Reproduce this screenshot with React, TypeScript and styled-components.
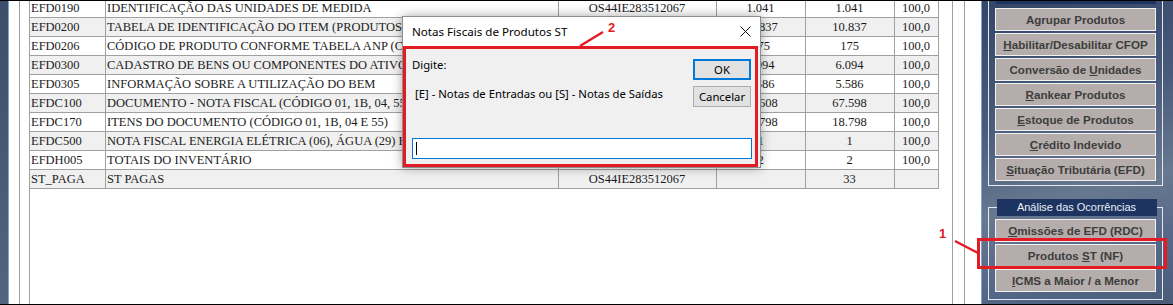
import React from "react";
import styled, { createGlobalStyle } from "styled-components";

const GlobalStyle = createGlobalStyle`
  html, body {
    margin: 0;
    padding: 0;
    background: #fff;
  }
  body {
    width: 1173px;
    height: 305px;
    overflow: hidden;
  }
`;

const Screen = styled.div`
  position: relative;
  display: flex;
  width: 1173px;
  height: 305px;
  box-sizing: border-box;
  border-top: 1px solid #000;
  border-bottom: 1px solid #000;
  overflow: hidden;
`;

const DesktopEdge = styled.div`
  flex: none;
  width: 8px;
  background: linear-gradient(180deg, #3c4d6a 0%, #52647e 100%);
`;

const Workspace = styled.div`
  flex: none;
  display: flex;
  width: 974px;
  box-sizing: border-box;
  padding: 0 16px 0 10px;
  background: #fff;
  border-left: 1px solid #7ea4d4;
  border-right: 1px solid #7ea4d4;
`;

const Frame = styled.div<{ $padLeft: number; $padRight: number }>`
  flex: 1;
  display: flex;
  min-width: 0;
  padding: 0 ${(p) => p.$padRight}px 0 ${(p) => p.$padLeft}px;
  border-left: 1px solid #a0a0a0;
  border-right: 1px solid #a0a0a0;
`;

const Grid = styled.div`
  flex: 1;
  min-width: 0;
  margin-top: -2px;
  font-family: "Liberation Serif", "Times New Roman", serif;
  font-size: 12.5px;
  color: #1c1c1c;
`;

const Row = styled.div<{ $alt: boolean }>`
  display: grid;
  grid-template-columns: 76px 453px 158px 89px 89px 44px;
  width: 909px;
  height: 19px;
  box-sizing: border-box;
  border-bottom: 1px solid #a0a0a0;
  background: ${(p) => (p.$alt ? "#f0f0f0" : "#fff")};
`;

const Cell = styled.div<{ $center?: boolean }>`
  box-sizing: border-box;
  border-right: 1px solid #a0a0a0;
  padding: 0 2px 0 1px;
  line-height: 18px;
  white-space: nowrap;
  overflow: hidden;
  text-align: ${(p) => (p.$center ? "center" : "left")};
`;

const Panel = styled.div`
  flex: none;
  display: flex;
  flex-direction: column;
  width: 191px;
  box-sizing: border-box;
  padding: 0 10px 0 6px;
  background: linear-gradient(165deg, #33466a 0%, #485b7b 35%, #67788f 62%, #57698a 80%, #4a5c7a 100%);
`;

const GroupBox = styled.div`
  display: flex;
  flex-direction: column;
  gap: 2px;
  padding: 0 6px 4px;
  border: 1px solid #e4e9ef;
  border-top: none;
`;

const CutTitle = styled.div`
  height: 3px;
  margin: 0 0 2px 1px;
  width: 160px;
  background: #1d3461;
`;

const FieldGroup = styled.fieldset`
  display: flex;
  flex-direction: column;
  gap: 2px;
  margin: 13px 0 0;
  padding: 3px 6px 7px;
  min-inline-size: 0;
  border: 1px solid #e4e9ef;
`;

const Legend = styled.legend`
  box-sizing: border-box;
  width: 160px;
  height: 17px;
  margin-left: 1px;
  padding: 0;
  background: #1d3461;
  color: #e9eef5;
  font-family: "Liberation Sans", Arial, sans-serif;
  font-size: 11px;
  line-height: 17px;
  text-align: center;
`;

const ActionButton = styled.button`
  display: block;
  width: 161px;
  height: 23px;
  box-sizing: border-box;
  margin: 0;
  padding: 0;
  border: 1px solid #f2f2f2;
  background: #b4adab;
  color: #3d3d3d;
  font-family: "Liberation Sans", Arial, sans-serif;
  font-weight: bold;
  font-size: 11.6px;
  line-height: 21px;
  text-align: center;
  white-space: nowrap;

  u {
    text-decoration-thickness: 1px;
    text-underline-offset: 1px;
  }
`;

const Dialog = styled.div`
  position: absolute;
  left: 402px;
  top: 15px;
  width: 359px;
  height: 152px;
  box-sizing: border-box;
  display: flex;
  flex-direction: column;
  border: 1px solid #8e8e8e;
  background: #f0f0f0;
  box-shadow: 0 0 10px rgba(0, 0, 0, 0.35);
  font-family: "Noto Sans", "Open Sans", sans-serif;
  font-size: 11.3px;
  color: #000;
`;

const TitleBar = styled.div`
  display: flex;
  align-items: center;
  justify-content: space-between;
  height: 29px;
  padding: 0 9px 0 9px;
  background: #fff;
  font-size: 11.6px;
`;

const DialogBody = styled.div`
  flex: 1;
  display: flex;
  flex-direction: column;
  padding: 11px 8px 8px 9px;
`;

const PromptRow = styled.div`
  display: flex;
  justify-content: space-between;
`;

const PromptText = styled.div`
  display: flex;
  flex-direction: column;
  gap: 13px;
  line-height: 16px;
`;

const Message = styled.div`
  padding-left: 3px;
`;

const ButtonColumn = styled.div`
  display: flex;
  flex-direction: column;
  gap: 6px;
  margin: 2px 1px 0 0;
`;

const DialogButton = styled.button<{ $default?: boolean }>`
  width: 58px;
  height: 21px;
  box-sizing: border-box;
  margin: 0;
  padding: 0;
  background: #e1e1e1;
  border: ${(p) => (p.$default ? "2px solid #0078d7" : "1px solid #adadad")};
  font-family: "Noto Sans", "Open Sans", sans-serif;
  font-size: 11.3px;
  color: #000;
`;

const TextInput = styled.div`
  position: relative;
  margin-top: auto;
  height: 21px;
  box-sizing: border-box;
  border: 1px solid #0078d7;
  background: #fff;
`;

const Caret = styled.span`
  position: absolute;
  left: 3px;
  top: 3px;
  width: 1px;
  height: 13px;
  background: #000;
`;

const Overlay = styled.svg`
  position: absolute;
  left: 0;
  top: -1px;
  pointer-events: none;
`;

type Line = [string, string, string, string, string, string];

const rows: Line[] = [
  ["EFD0190", "IDENTIFICAÇÃO DAS UNIDADES DE MEDIDA", "OS44IE283512067", "1.041", "1.041", "100,0"],
  ["EFD0200", "TABELA DE IDENTIFICAÇÃO DO ITEM (PRODUTOS E SERVIÇOS)", "OS44IE283512067", "10.837", "10.837", "100,0"],
  ["EFD0206", "CÓDIGO DE PRODUTO CONFORME TABELA ANP (COMBUSTÍVEIS)", "OS44IE283512067", "175", "175", "100,0"],
  ["EFD0300", "CADASTRO DE BENS OU COMPONENTES DO ATIVO IMOBILIZADO", "OS44IE283512067", "6.094", "6.094", "100,0"],
  ["EFD0305", "INFORMAÇÃO SOBRE A UTILIZAÇÃO DO BEM", "OS44IE283512067", "5.586", "5.586", "100,0"],
  ["EFDC100", "DOCUMENTO - NOTA FISCAL (CÓDIGO 01, 1B, 04, 55)", "OS44IE283512067", "67.608", "67.598", "100,0"],
  ["EFDC170", "ITENS DO DOCUMENTO (CÓDIGO 01, 1B, 04 E 55)", "OS44IE283512067", "18.798", "18.798", "100,0"],
  ["EFDC500", "NOTA FISCAL ENERGIA ELÉTRICA (06), ÁGUA (29) E GÁS (28)", "OS44IE283512067", "1", "1", "100,0"],
  ["EFDH005", "TOTAIS DO INVENTÁRIO", "OS44IE283512067", "2", "2", "100,0"],
  ["ST_PAGA", "ST PAGAS", "OS44IE283512067", "", "33", ""],
];

// label split as [before, underlined, after]
const toolButtons: [string, string, string][] = [
  ["A", "g", "rupar Produtos"],
  ["", "H", "abilitar/Desabilitar CFOP"],
  ["Conversão de ", "U", "nidades"],
  ["", "R", "ankear Produtos"],
  ["", "E", "stoque de Produtos"],
  ["", "C", "rédito Indevido"],
  ["", "S", "ituação Tributária (EFD)"],
];

const analysisButtons: [string, string, string][] = [
  ["", "O", "missões de EFD (RDC)"],
  ["Produtos ", "S", "T (NF)"],
  ["", "I", "CMS a Maior / a Menor"],
];

const renderButton = ([a, key, b]: [string, string, string]) => (
  <ActionButton key={a + key + b}>
    {a}
    <u>{key}</u>
    {b}
  </ActionButton>
);

export default function App() {
  return (
    <>
      <GlobalStyle />
      <Screen>
        <DesktopEdge />
        <Workspace>
          <Frame $padLeft={9} $padRight={11}>
            <Frame $padLeft={0} $padRight={0}>
              <Grid>
                {rows.map((r, i) => (
                  <Row key={r[0]} $alt={i % 2 === 1}>
                    <Cell>{r[0]}</Cell>
                    <Cell>{r[1]}</Cell>
                    <Cell $center>{r[2]}</Cell>
                    <Cell $center>{r[3]}</Cell>
                    <Cell $center>{r[4]}</Cell>
                    <Cell $center>{r[5]}</Cell>
                  </Row>
                ))}
              </Grid>
            </Frame>
          </Frame>
        </Workspace>

        <Panel>
          <GroupBox>
            <CutTitle />
            {toolButtons.map(renderButton)}
          </GroupBox>
          <FieldGroup>
            <Legend>Análise das Ocorrências</Legend>
            {analysisButtons.map(renderButton)}
          </FieldGroup>
        </Panel>

        <Dialog>
          <TitleBar>
            <span>Notas Fiscais de Produtos ST</span>
            <svg width="11" height="11" viewBox="0 0 11 11">
              <path d="M0.5 0.5 L10.5 10.5 M10.5 0.5 L0.5 10.5" stroke="#111" strokeWidth="1" />
            </svg>
          </TitleBar>
          <DialogBody>
            <PromptRow>
              <PromptText>
                <div>Digite:</div>
                <Message>[E] - Notas de Entradas ou [S] - Notas de Saídas</Message>
              </PromptText>
              <ButtonColumn>
                <DialogButton $default>OK</DialogButton>
                <DialogButton>Cancelar</DialogButton>
              </ButtonColumn>
            </PromptRow>
            <TextInput>
              <Caret />
            </TextInput>
          </DialogBody>
        </Dialog>

        <Overlay width="1173" height="305">
          <rect x="404.5" y="47.5" width="352" height="118" fill="none" stroke="#e31b23" strokeWidth="3" />
          <line x1="580" y1="46" x2="603" y2="32" stroke="#e31b23" strokeWidth="2.5" />
          <text x="608" y="32" fill="#e31b23" fontFamily="Liberation Sans, Arial, sans-serif" fontWeight="bold" fontSize="13">
            2
          </text>
          <rect x="978.5" y="239.5" width="187" height="28" fill="none" stroke="#e31b23" strokeWidth="3" />
          <line x1="955" y1="241" x2="978" y2="253" stroke="#e31b23" strokeWidth="2.5" />
          <text x="939" y="238" fill="#e31b23" fontFamily="Liberation Sans, Arial, sans-serif" fontWeight="bold" fontSize="13">
            1
          </text>
        </Overlay>
      </Screen>
    </>
  );
}
